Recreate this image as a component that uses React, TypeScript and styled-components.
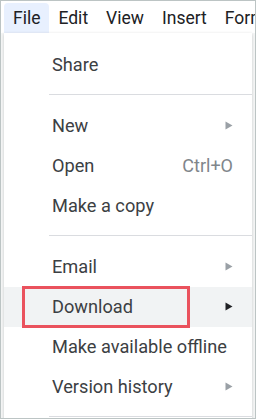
import React from "react";
import styled, { createGlobalStyle } from "styled-components";

const Global = createGlobalStyle`
  html, body { margin: 0; padding: 0; background: #fff; }
  body { font-family: Roboto, "Liberation Sans", Arial, sans-serif; }
`;

const Frame = styled.div`
  width: 256px;
  height: 419px;
  box-sizing: border-box;
  border: 1px solid #bcc4c4;
  background: #fff;
  overflow: hidden;
  display: flex;
  flex-direction: column;
`;

const MenuBar = styled.div`
  display: flex;
  align-items: flex-end;
  height: 32px;
  padding-left: 3px;
  flex-shrink: 0;
  white-space: nowrap;
`;

const MenuTab = styled.div<{ $active?: boolean }>`
  height: 30px;
  line-height: 31px;
  padding: 0 9px;
  font-size: 17.5px;
  color: #202124;
  border-radius: 4px 4px 0 0;
  background: ${(p) => (p.$active ? "#e8f0fe" : "transparent")};
`;

const Body = styled.div`
  flex: 1;
  display: flex;
  background: #f6f7f7;
`;

const Panel = styled.div`
  margin-left: 3px;
  width: 248px;
  background: #fff;
  padding-top: 12px;
  box-shadow: 0 1px 3px rgba(60, 64, 67, 0.25);
  display: flex;
  flex-direction: column;
`;

const Row = styled.div<{ $hover?: boolean }>`
  position: relative;
  height: 40px;
  flex-shrink: 0;
  display: flex;
  align-items: center;
  padding: 0 19px 1px 48px;
  box-sizing: border-box;
  font-size: 18.2px;
  color: #3c4043;
  white-space: nowrap;
  background: ${(p) => (p.$hover ? "#f1f3f4" : "transparent")};
`;

const Label = styled.span`
  flex: 1;
`;

const Shortcut = styled.span`
  color: #80868b;
  font-size: 18px;
`;

const Divider = styled.div`
  height: 1px;
  flex-shrink: 0;
  margin: 9px 0 11px 45px;
  background: #dadce0;
`;

const Highlight = styled.div`
  position: absolute;
  left: 18px;
  top: -1px;
  width: 168px;
  height: 42px;
  box-sizing: border-box;
  border: 3px solid #ea525d;
  pointer-events: none;
`;

const Arrow = ({ dark }: { dark?: boolean }) => (
  <svg width="8" height="9" viewBox="0 0 8 9" style={{ display: "block" }}>
    <path d="M0.5 0.5 L7.5 4.5 L0.5 8.5 Z" fill={dark ? "#202124" : "#9aa0a6"} />
  </svg>
);

type Item =
  | { kind: "divider" }
  | { kind: "item"; label: string; sub?: boolean; shortcut?: string; hover?: boolean };

const items: Item[] = [
  { kind: "item", label: "Share" },
  { kind: "divider" },
  { kind: "item", label: "New", sub: true },
  { kind: "item", label: "Open", shortcut: "Ctrl+O" },
  { kind: "item", label: "Make a copy" },
  { kind: "divider" },
  { kind: "item", label: "Email", sub: true },
  { kind: "item", label: "Download", sub: true, hover: true },
  { kind: "item", label: "Make available offline" },
  { kind: "item", label: "Version history", sub: true },
  { kind: "divider" },
];

export default function App() {
  return (
    <>
      <Global />
      <Frame>
        <MenuBar>
          <MenuTab $active>File</MenuTab>
          <MenuTab>Edit</MenuTab>
          <MenuTab>View</MenuTab>
          <MenuTab>Insert</MenuTab>
          <MenuTab>Format</MenuTab>
        </MenuBar>
        <Body>
          <Panel>
            {items.map((it, i) =>
              it.kind === "divider" ? (
                <Divider key={i} />
              ) : (
                <Row key={i} $hover={it.hover}>
                  <Label>{it.label}</Label>
                  {it.shortcut && <Shortcut>{it.shortcut}</Shortcut>}
                  {it.sub && <Arrow dark={it.hover} />}
                  {it.hover && <Highlight />}
                </Row>
              )
            )}
          </Panel>
        </Body>
      </Frame>
    </>
  );
}
